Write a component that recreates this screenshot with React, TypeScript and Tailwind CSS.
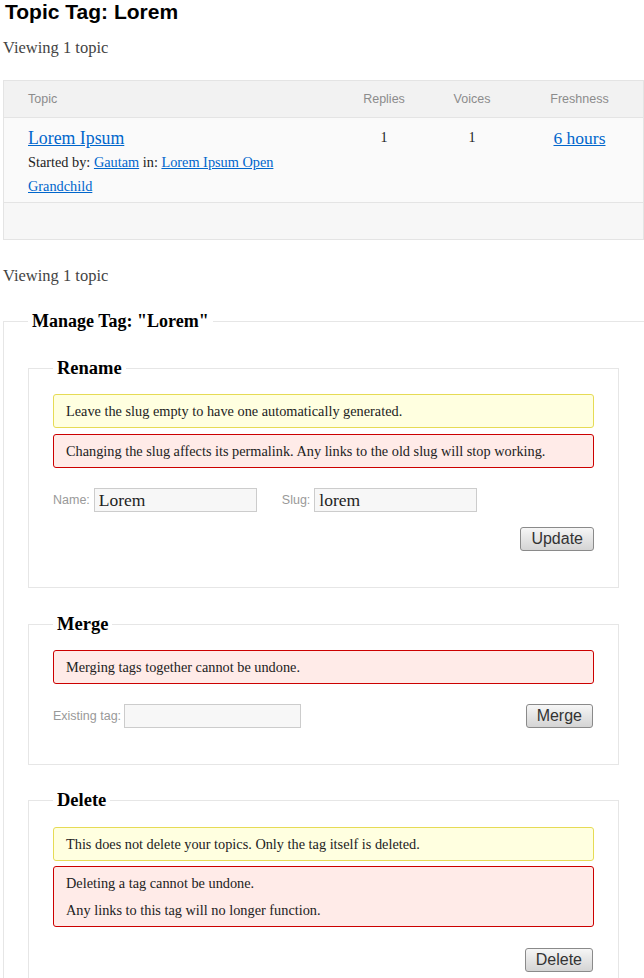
import React from "react";

const serif = "font-['Liberation_Serif',serif]";
const sans = "font-['Liberation_Sans',Arial,sans-serif]";

function Notice({ kind, children }: { kind: "info" | "warn"; children: React.ReactNode }) {
  const tone =
    kind === "info"
      ? "bg-[#ffffe0] border-[#e6db55]"
      : "bg-[#ffebe8] border-[#cc0000]";
  return (
    <div className={`border rounded-[3px] px-3 py-2 text-[14.3px] leading-[16px] text-[#222] flex flex-col gap-[11px] ${tone}`}>
      {children}
    </div>
  );
}

function Button({ children }: { children: React.ReactNode }) {
  return (
    <button
      className={`${sans} h-6 px-[10px] text-[16px] leading-[20px] text-[#333] border border-[#8a8a8a] rounded-[3px] bg-gradient-to-b from-[#f6f6f6] to-[#d4d4d4]`}
    >
      {children}
    </button>
  );
}

function TextInput({ value, width }: { value: string; width: string }) {
  return (
    <input
      readOnly
      value={value}
      className={`${serif} ${width} h-6 px-1 border border-[#cccccc] bg-[#f7f7f7] text-[17.5px] text-[#222] outline-none`}
    />
  );
}

function Section({
  title,
  children,
  className = "",
}: {
  title: string;
  children: React.ReactNode;
  className?: string;
}) {
  return (
    <fieldset className={`border border-[#e6e6e6] px-6 pt-[5px] ${className}`}>
      <legend className="px-1 text-[18.5px] leading-[20px] font-bold text-black">{title}</legend>
      {children}
    </fieldset>
  );
}

export default function App() {
  return (
    <div className={`${serif} w-[644px] min-h-[978px] bg-white text-[#333] overflow-hidden`}>
      <h1 className={`${sans} font-bold text-[21px] leading-[24px] text-black px-[5px]`}>
        Topic Tag: Lorem
      </h1>
      <p className="px-[3px] mt-[13px] text-[16.5px] leading-[22px] text-[#444]">Viewing 1 topic</p>

      {/* topics table */}
      <div className="ml-[3px] mt-[21px] border border-[#e4e4e4]">
        <div className={`${sans} grid grid-cols-[336px_88px_88px_1fr] h-9 items-center bg-[#f2f2f2] text-[12.5px] text-[#8c8c8c]`}>
          <div className="pl-6">Topic</div>
          <div className="text-center">Replies</div>
          <div className="text-center">Voices</div>
          <div className="text-center">Freshness</div>
        </div>
        <div className="grid grid-cols-[336px_88px_88px_1fr] bg-[#fafafa] border-t border-[#e4e4e4] pt-[8px] pb-[4px]">
          <div className="pl-6 pr-[40px]">
            <div className="h-6 leading-[24px]">
              <a href="#" className="text-[17.8px] leading-[24px] text-[#0066cc] underline">
                Lorem Ipsum
              </a>
            </div>
            <div className="text-[14.3px] leading-[24px] text-[#222]">
              Started by:{" "}
              <a href="#" className="text-[#0066cc] underline">Gautam</a> in:{" "}
              <a href="#" className="text-[#0066cc] underline">Lorem Ipsum Open Grandchild</a>
            </div>
          </div>
          <div className="text-center text-[14px] leading-[24px] text-[#222]">1</div>
          <div className="text-center text-[14px] leading-[24px] text-[#222]">1</div>
          <div className="text-center h-6 leading-[24px]">
            <a href="#" className="text-[17.5px] leading-[24px] text-[#0066cc] underline">
              6 hours
            </a>
          </div>
        </div>
        <div className="h-[37px] bg-[#f7f7f7] border-t border-[#e4e4e4]" />
      </div>

      <p className="px-[3px] mt-[25px] text-[16.5px] leading-[22px] text-[#444]">Viewing 1 topic</p>

      {/* manage tag */}
      <fieldset className="ml-[3px] mt-[24px] border border-r-0 border-[#e6e6e6] pl-6 pr-[25px] pb-4">
        <legend className="px-1 text-[18px] leading-[20px] font-bold text-black">
          Manage Tag: "Lorem"
        </legend>

        <Section title="Rename" className="mt-[27px] pb-[36px]">
          <div className="mt-[11px] flex flex-col gap-[6px]">
            <Notice kind="info">
              <p>Leave the slug empty to have one automatically generated.</p>
            </Notice>
            <Notice kind="warn">
              <p>Changing the slug affects its permalink. Any links to the old slug will stop working.</p>
            </Notice>
          </div>
          <div className={`mt-[20px] flex items-center ${sans} text-[12.5px] text-[#999]`}>
            <label className="mr-[4px]">Name:</label>
            <TextInput value="Lorem" width="w-[163px]" />
            <label className="ml-[25px] mr-[4px]">Slug:</label>
            <TextInput value="lorem" width="w-[163px]" />
          </div>
          <div className="mt-[15px] flex justify-end">
            <Button>Update</Button>
          </div>
        </Section>

        <Section title="Merge" className="mt-[26px] pb-[36px]">
          <div className="mt-[11px]">
            <Notice kind="warn">
              <p>Merging tags together cannot be undone.</p>
            </Notice>
          </div>
          <div className={`mt-[20px] flex items-start ${sans} text-[12.5px] text-[#999]`}>
            <label className="mr-[3px] leading-6">Existing tag:</label>
            <TextInput value="" width="w-[177px]" />
            <div className="ml-auto pr-px flex">
              <Button>Merge</Button>
            </div>
          </div>
        </Section>

        <Section title="Delete" className="mt-[25px] pb-[36px]">
          <div className="mt-[12px] flex flex-col gap-[5px]">
            <Notice kind="info">
              <p>This does not delete your topics. Only the tag itself is deleted.</p>
            </Notice>
            <Notice kind="warn">
              <p>Deleting a tag cannot be undone.</p>
              <p>Any links to this tag will no longer function.</p>
            </Notice>
          </div>
          <div className="mt-[21px] flex justify-end pr-px">
            <Button>Delete</Button>
          </div>
        </Section>
      </fieldset>
    </div>
  );
}
